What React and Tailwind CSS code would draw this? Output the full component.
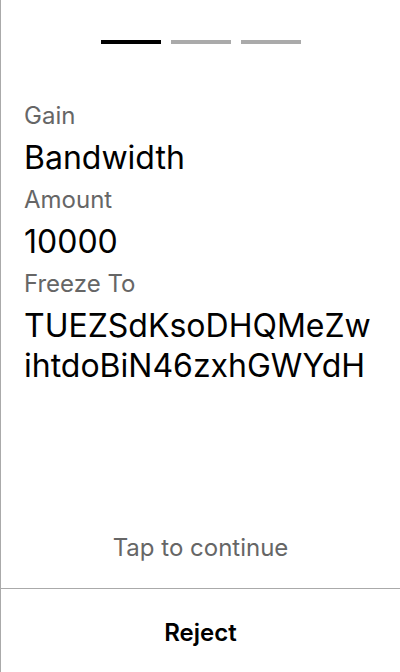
export default function App() {
  const font = { fontFamily: "Inter, 'Noto Sans', sans-serif" };
  return (
    <div style={font} className="w-[400px] h-[672px] bg-white border-l border-[#aaaaaa] flex flex-col">
      <div className="pt-10 flex justify-center gap-[10px]">
        <div className="w-[60px] h-1 bg-black" />
        <div className="w-[60px] h-1 bg-[#aaaaaa]" />
        <div className="w-[60px] h-1 bg-[#aaaaaa]" />
      </div>
      <div className="pl-[23px] pr-6 pt-[58px] flex-1">
        <div className="text-[24px] leading-[28px] text-[#666666] mb-2">Gain</div>
        <div className="text-[32px] leading-[40px] text-black mb-2">Bandwidth</div>
        <div className="text-[24px] leading-[28px] text-[#666666] mb-2">Amount</div>
        <div className="text-[32px] leading-[40px] text-black mb-2">10000</div>
        <div className="text-[24px] leading-[28px] text-[#666666] mb-2">Freeze To</div>
        <div className="text-[32px] leading-[40px] text-black break-all">TUEZSdKsoDHQMeZwihtdoBiN46zxhGWYdH</div>
      </div>
      <div className="text-center text-[24px] leading-[28px] text-[#666666] pb-[26px]">Tap to continue</div>
      <div className="border-t border-[#aaaaaa] h-[84px] pt-[5px] flex items-center justify-center">
        <span className="text-[24px] font-semibold text-black">Reject</span>
      </div>
    </div>
  );
}
